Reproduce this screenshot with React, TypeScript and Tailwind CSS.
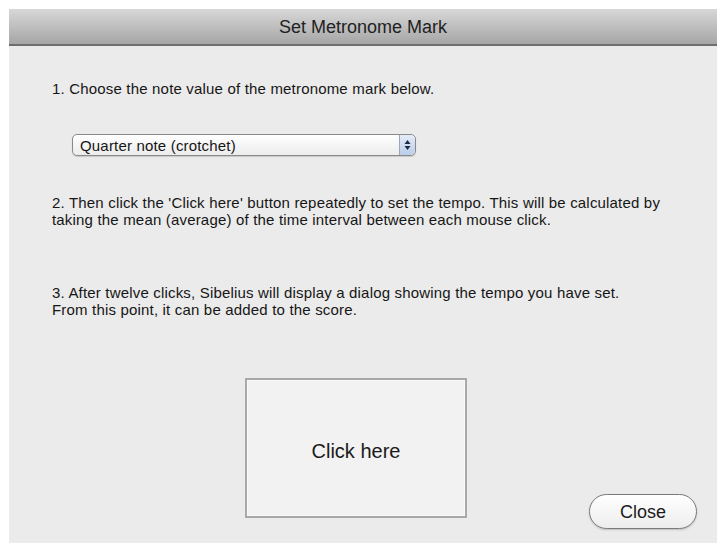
import { useState } from "react";

const FONT = { fontFamily: '"Liberation Sans", Arial, sans-serif' };

function PopupArrows() {
  return (
    <svg width="9" height="14" viewBox="0 0 9 14" className="block">
      <path d="M4.5 2 L7.5 6 H1.5 Z" fill="#1f2a44" />
      <path d="M4.5 12 L7.5 8 H1.5 Z" fill="#1f2a44" />
    </svg>
  );
}

export default function App() {
  const [clicks, setClicks] = useState(0);

  return (
    <div
      className="w-[717px] h-[543px] bg-white pt-[9px] pl-[9px] overflow-hidden text-[#161616]"
      style={FONT}
    >
      <div className="h-full bg-[#ebebeb] flex flex-col">
        {/* title bar */}
        <div className="h-[37px] shrink-0 flex items-center justify-center bg-gradient-to-b from-[#d8d8d8] to-[#a6a6a6] border-b-2 border-[#6e6e6e]">
          <span className="text-[18px] text-[#222] pt-[1px]">Set Metronome Mark</span>
        </div>

        <div className="flex flex-col pl-[43px] pt-[34px] text-[15px] leading-[17px] tracking-[0.18px]">
          <p>1. Choose the note value of the metronome mark below.</p>

          <div className="mt-[37px] ml-[20px] w-[344px] h-[22px] flex items-center rounded-[5px] border border-[#8a8a8a] bg-gradient-to-b from-white to-[#ececec] shadow-[0_1px_1px_rgba(0,0,0,0.15)]">
            <span className="flex-1 pl-[7px]">Quarter note (crotchet)</span>
            <div className="w-[16px] h-full flex items-center justify-center border-l border-[#9aa6bd] rounded-r-[5px] bg-gradient-to-b from-[#e4ecf8] to-[#b9cdea]">
              <PopupArrows />
            </div>
          </div>

          <p className="mt-[38px]">
            2. Then click the 'Click here' button repeatedly to set the tempo. This will be calculated by
            <br />
            taking the mean (average) of the time interval between each mouse click.
          </p>

          <p className="mt-[56px]">
            3. After twelve clicks, Sibelius will display a dialog showing the tempo you have set.
            <br />
            From this point, it can be added to the score.
          </p>

          <div className="mt-[60px] flex items-start pr-[20px] tracking-normal">
            <button
              type="button"
              onClick={() => setClicks(clicks + 1)}
              className="ml-[193px] w-[222px] h-[140px] pt-[7px] border-2 border-[#a8a8a8] bg-[#f2f2f2] shadow-[inset_0_0_0_1px_#fafafa] flex items-center justify-center text-[20px] text-[#1a1a1a]"
            >
              Click here
            </button>
            <button
              type="button"
              className="ml-auto mt-[116px] w-[108px] h-[35px] pt-[2px] rounded-full border border-[#7a7a7a] bg-gradient-to-b from-white to-[#ededed] shadow-[0_1px_2px_rgba(0,0,0,0.2)] text-[18px] text-[#1a1a1a]"
            >
              Close
            </button>
          </div>
        </div>
      </div>
    </div>
  );
}
